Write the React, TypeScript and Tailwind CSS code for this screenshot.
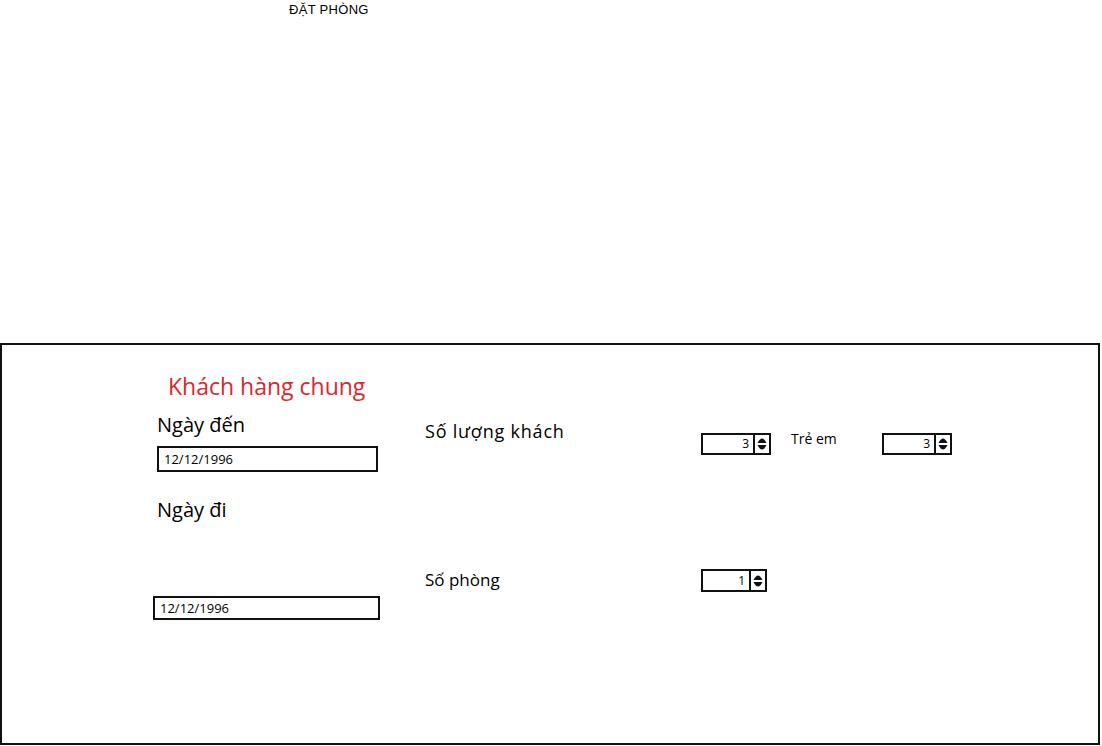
import React from "react";

const sans = { fontFamily: '"Open Sans", "Noto Sans", sans-serif' };

function Arrows() {
  return (
    <svg width="12" height="18" viewBox="0 0 12 18" className="block">
      <path d="M1.5 8 Q6 -1 10.5 8 Z" fill="#111" />
      <path d="M1.5 10 Q6 19 10.5 10 Z" fill="#111" />
    </svg>
  );
}

function Spinner({ value, w, h }: { value: string; w: string; h: string }) {
  return (
    <div className={`flex ${w} ${h} border-2 border-[#111] bg-white`}>
      <div className="flex-1 flex items-center justify-end pr-[4px] text-[12px] leading-none text-black">
        {value}
      </div>
      <div className="w-[2px] bg-[#111]" />
      <div className="w-[14px] flex items-center justify-center">
        <Arrows />
      </div>
    </div>
  );
}

export default function App() {
  return (
    <div className="w-[1102px] h-[746px] bg-white overflow-hidden" style={sans}>
      <div
        className="pl-[289px] pt-[2px] text-[13px] leading-[15px] tracking-[0.3px] text-black"
        style={{ fontFamily: '"Liberation Sans", Arial, sans-serif' }}
      >
        ĐẶT PHÒNG
      </div>
      <div className="mt-[326px] w-[1100px] h-[402px] border-2 border-[#111] flex pl-[151px]">
        {/* left column */}
        <div className="w-[272px] flex flex-col items-start">
          <div className="mt-[27px] ml-[15px] text-[23px] leading-[28px] text-[#d9292e]">
            Khách hàng chung
          </div>
          <div className="mt-[13px] ml-[4px] text-[20px] leading-[24px] text-black">Ngày đến</div>
          <div className="mt-[9px] ml-[4px] w-[221px] h-[26px] border-2 border-[#111] flex items-center pl-[5px] text-[13px] leading-none text-black">
            12/12/1996
          </div>
          <div className="mt-[26px] ml-[4px] text-[20px] leading-[24px] text-black">Ngày đi</div>
          <div className="mt-[74px] w-[227px] h-[24px] border-2 border-[#111] flex items-center pl-[5px] text-[13px] leading-none text-black">
            12/12/1996
          </div>
        </div>
        {/* middle column */}
        <div className="w-[276px] flex flex-col items-start">
          <div className="mt-[74px] text-[18px] leading-[24px] tracking-[0.8px] text-black">Số lượng khách</div>
          <div className="mt-[125px] text-[17px] leading-[24px] text-black">Số phòng</div>
        </div>
        {/* right column */}
        <div className="flex flex-col items-start">
          <div className="mt-[83px] flex items-start">
            <div className="mt-[5px]">
              <Spinner value="3" w="w-[70px]" h="h-[22px]" />
            </div>
            <div className="ml-[20px] w-[91px] text-[14px] leading-[22px] text-black">Trẻ em</div>
            <div className="mt-[5px]">
              <Spinner value="3" w="w-[70px]" h="h-[22px]" />
            </div>
          </div>
          <div className="mt-[114px]">
            <Spinner value="1" w="w-[66px]" h="h-[23px]" />
          </div>
        </div>
      </div>
    </div>
  );
}
